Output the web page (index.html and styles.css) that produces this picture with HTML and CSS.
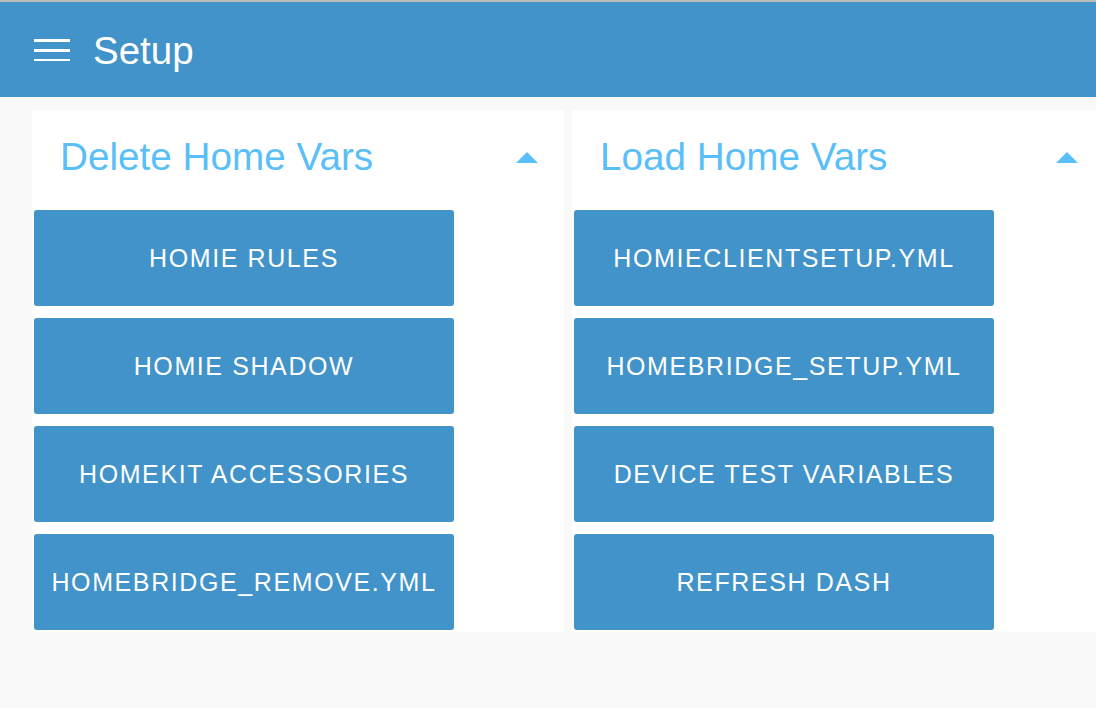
FILE: index.html
```html
<!DOCTYPE html>
<html>
<head>
<meta charset="utf-8">
<link rel="stylesheet" href="styles.css">
</head>
<body>
<header class="topbar">
  <button class="menu-btn" aria-label="Menu">
    <svg width="36" height="24" viewBox="0 0 36 24"><rect x="0" y="2" width="36" height="3" fill="#fff"/><rect x="0" y="12" width="36" height="3" fill="#fff"/><rect x="0" y="22" width="36" height="3" fill="#fff"/></svg>
  </button>
  <h1 class="title">Setup</h1>
</header>
<main class="content">
  <section class="card">
    <div class="card-head">
      <h2 class="card-title">Delete Home Vars</h2>
      <span class="caret"></span>
    </div>
    <div class="card-body">
      <button class="action">HOMIE RULES</button>
      <button class="action">HOMIE SHADOW</button>
      <button class="action">HOMEKIT ACCESSORIES</button>
      <button class="action">HOMEBRIDGE_REMOVE.YML</button>
    </div>
  </section>
  <section class="card">
    <div class="card-head">
      <h2 class="card-title">Load Home Vars</h2>
      <span class="caret"></span>
    </div>
    <div class="card-body">
      <button class="action">HOMIECLIENTSETUP.YML</button>
      <button class="action">HOMEBRIDGE_SETUP.YML</button>
      <button class="action">DEVICE TEST VARIABLES</button>
      <button class="action">REFRESH DASH</button>
    </div>
  </section>
</main>
</body>
</html>
```
FILE: styles.css
```css
html, body {
  margin: 0;
  padding: 0;
  background: #f9f9f9;
  font-family: "Liberation Sans", Arial, sans-serif;
  overflow: hidden;
}
.topbar {
  box-sizing: border-box;
  height: 97px;
  border-top: 2px solid #bdbdbd;
  background: #4193c9;
  display: flex;
  align-items: center;
  padding-left: 34px;
}
.menu-btn {
  background: none;
  border: 0;
  padding: 0;
  width: 36px;
  height: 27px;
  display: flex;
  margin-top: 2px;
}
.title {
  margin: 3px 0 0 23px;
  color: #fff;
  font-weight: normal;
  font-size: 38.5px;
  line-height: 1;
}
.content {
  display: grid;
  grid-template-columns: 532px 532px;
  column-gap: 8px;
  padding: 13px 0 0 32px;
  align-items: start;
}
.card {
  background: #fff;
  padding: 0 2px 2px 2px;
}
.card-head {
  height: 100px;
  display: flex;
  align-items: center;
  justify-content: space-between;
  padding: 0 24px 0 26px;
}
.card-title {
  margin: -5px 0 0 0;
  font-weight: normal;
  font-size: 38.7px;
  line-height: 1;
  color: #5abff8;
}
.caret {
  width: 0;
  height: 0;
  border-left: 11px solid transparent;
  border-right: 11px solid transparent;
  border-bottom: 11px solid #5abff8;
  margin-top: -6px;
}
.card-body {
  display: flex;
  flex-direction: column;
  gap: 12px;
}
.action {
  width: 420px;
  height: 96px;
  border: 0;
  border-radius: 3px;
  background: #4193c9;
  color: #fff;
  font-family: "Liberation Sans", Arial, sans-serif;
  font-size: 25px;
  letter-spacing: 1.6px;
  padding: 0;
}
```
